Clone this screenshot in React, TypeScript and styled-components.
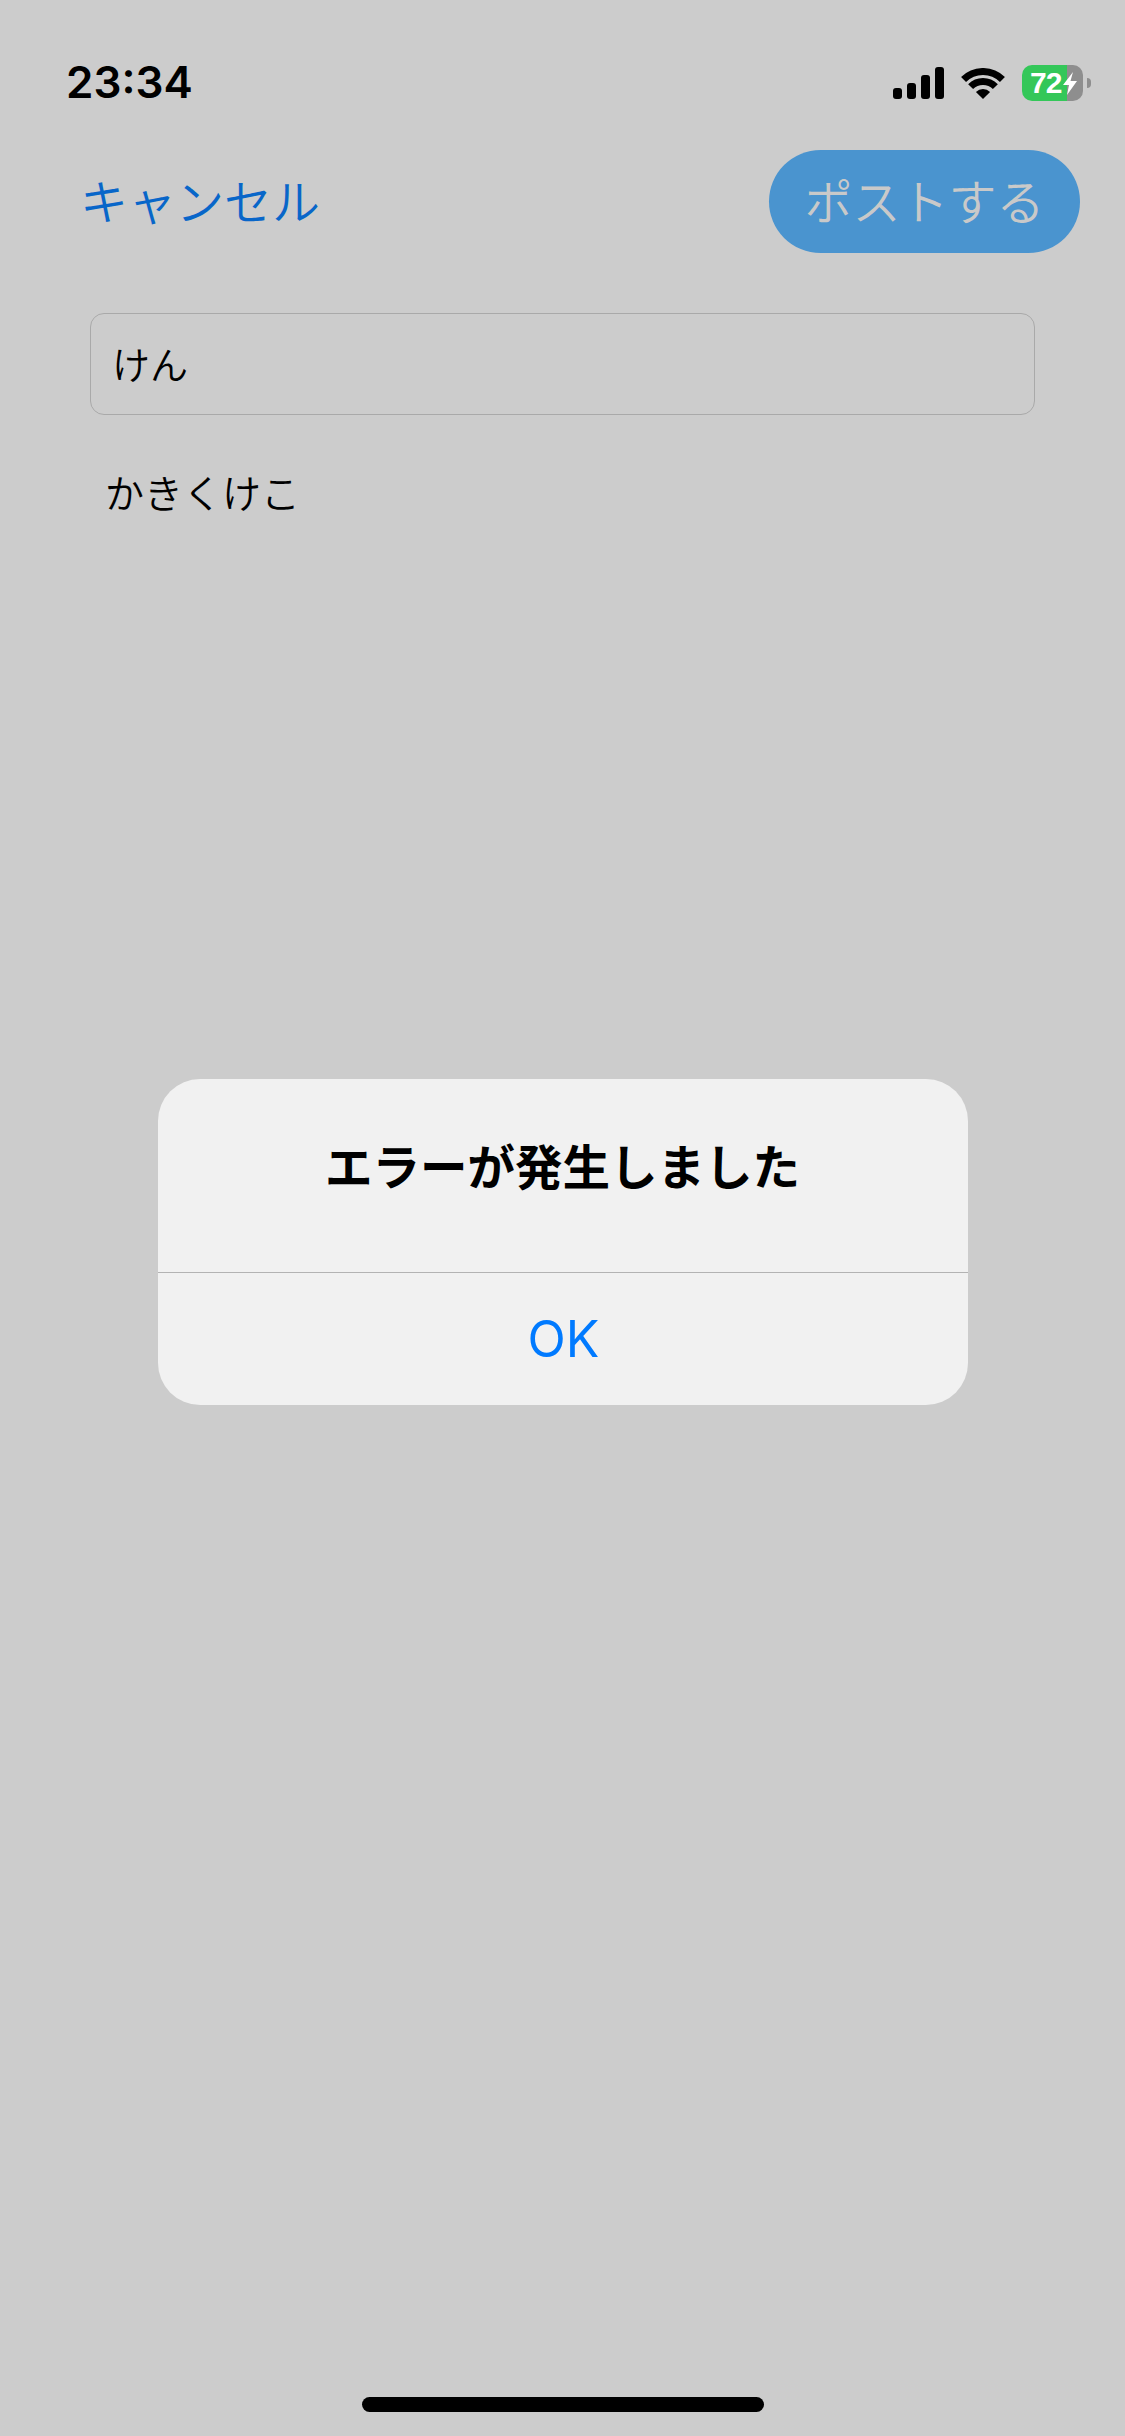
import styled, {createGlobalStyle} from "styled-components";

const CJK = `"Noto Sans CJK JP", "Noto Sans", sans-serif`;

const GlobalStyle = createGlobalStyle`
  html, body {
    margin: 0;
    padding: 0;
    background-color: #cccccc;
  }
`;

const App = () => {
  return (
    <Page>
      <GlobalStyle />
      <StatusBar>
        <Clock>23:34</Clock>
        <StatusIcons>
          <SignalBars>
            <Bar $height={11} />
            <Bar $height={16} />
            <Bar $height={24} />
            <Bar $height={32} />
          </SignalBars>
          <svg width="46" height="31" viewBox="0 0 46 31">
            <path d="M3.55 11.55A27.5 27.5 0 0 1 42.45 11.55" fill="none" stroke="#000" strokeWidth="7" />
            <path d="M10.63 18.63A17.5 17.5 0 0 1 35.37 18.63" fill="none" stroke="#000" strokeWidth="7" />
            <path d="M23 31L15.93 23.93A10 10 0 0 1 30.07 23.93Z" fill="#000" />
          </svg>
          <BatteryWrap>
            <BatteryBody>
              <BatteryLevel>72</BatteryLevel>
              <svg width="14" height="23" viewBox="0 0 14 23">
                <path d="M10 0L0 13H6L4 23L14 9H7.5Z" fill="#fff" />
              </svg>
            </BatteryBody>
            <BatteryCap />
          </BatteryWrap>
        </StatusIcons>
      </StatusBar>

      <NavBar>
        <CancelLink>キャンセル</CancelLink>
        <PostButton>ポストする</PostButton>
      </NavBar>

      <Form>
        <TitleField>けん</TitleField>
        <BodyText>かきくけこ</BodyText>
      </Form>

      <HomeIndicator />

      <Overlay>
        <Alert>
          <AlertBody>
            <AlertTitle>エラーが発生しました</AlertTitle>
          </AlertBody>
          <AlertButton>OK</AlertButton>
        </Alert>
      </Overlay>
    </Page>
  );
};

const Page = styled.div`
  position: relative;
  display: flex;
  flex-direction: column;
  width: 1125px;
  height: 2436px;
  overflow: hidden;
  background-color: #cccccc;
`;

const StatusBar = styled.div`
  display: flex;
  justify-content: space-between;
  align-items: center;
  height: 36px;
  padding: 64px 34px 50px 66px;
`;

const Clock = styled.span`
  font-family: Inter, "Liberation Sans", sans-serif;
  font-size: 44px;
  font-weight: 600;
  line-height: 36px;
  color: #000;
`;

const StatusIcons = styled.div`
  display: flex;
  align-items: flex-end;
  gap: 16px;
`;

const SignalBars = styled.div`
  display: flex;
  align-items: flex-end;
  gap: 5px;
`;

const Bar = styled.div<{$height: number}>`
  width: 9px;
  height: ${(p) => p.$height}px;
  border-radius: 3px;
  background-color: #000;
`;

const BatteryWrap = styled.div`
  display: flex;
  align-items: center;
  gap: 4px;
  margin-bottom: -2px;
`;

const BatteryBody = styled.div`
  display: flex;
  align-items: center;
  gap: 2px;
  box-sizing: border-box;
  width: 61px;
  height: 36px;
  padding-left: 8px;
  border-radius: 10px;
  background: linear-gradient(to right, #34c759 45px, #8e8e8e 45px);
`;

const BatteryLevel = styled.span`
  font-family: "Liberation Sans", Arial, sans-serif;
  font-size: 30px;
  font-weight: 700;
  line-height: 36px;
  letter-spacing: -1px;
  color: #fff;
`;

const BatteryCap = styled.div`
  width: 4px;
  height: 10px;
  border-radius: 0 5px 5px 0;
  background-color: #8e8e8e;
`;

const NavBar = styled.div`
  display: flex;
  justify-content: space-between;
  align-items: center;
  padding: 0 45px 0 80px;
`;

const CancelLink = styled.span`
  margin-bottom: 6px;
  font-family: ${CJK};
  font-size: 48px;
  font-weight: 350;
  color: #0866c9;
`;

const PostButton = styled.button`
  width: 311px;
  height: 103px;
  padding: 0 0 6px;
  border: none;
  border-radius: 52px;
  font-family: ${CJK};
  font-size: 48px;
  font-weight: 350;
  color: #c9c9c9;
  background-color: #4a94cf;
`;

const Form = styled.div`
  display: flex;
  flex-direction: column;
  align-items: flex-start;
  padding: 60px 90px 0;
`;

const TitleField = styled.div`
  box-sizing: border-box;
  display: flex;
  align-items: center;
  width: 945px;
  height: 102px;
  padding: 0 0 4px 21px;
  border: 1.5px solid #a9a9a9;
  border-radius: 14px;
  font-family: ${CJK};
  font-size: 38px;
  font-weight: 350;
  color: #000;
`;

const BodyText = styled.p`
  margin: 48px 0 0 15px;
  font-family: ${CJK};
  font-size: 39px;
  font-weight: 350;
  line-height: 56px;
  color: #000;
`;

const HomeIndicator = styled.div`
  align-self: center;
  width: 402px;
  height: 15px;
  margin-top: auto;
  margin-bottom: 24px;
  border-radius: 8px;
  background-color: #000;
`;

const Overlay = styled.div`
  position: absolute;
  inset: 0;
  display: flex;
  justify-content: center;
  align-items: flex-start;
  padding-top: 1079px;
`;

const Alert = styled.div`
  display: flex;
  flex-direction: column;
  width: 810px;
  height: 326px;
  border-radius: 42px;
  background-color: #f1f1f1;
`;

const AlertBody = styled.div`
  display: flex;
  justify-content: center;
  height: 194px;
  padding-top: 51px;
  box-sizing: border-box;
  border-bottom: 1.5px solid #b3b3b3;
`;

const AlertTitle = styled.h2`
  margin: 0;
  font-family: ${CJK};
  font-size: 47.5px;
  font-weight: 700;
  line-height: 70px;
  color: #000;
`;

const AlertButton = styled.button`
  flex: 1;
  padding: 0 0 0 2px;
  border: none;
  background: none;
  font-family: Inter, "Liberation Sans", sans-serif;
  font-size: 50px;
  font-weight: 400;
  color: #007aff;
`;

export default App;
